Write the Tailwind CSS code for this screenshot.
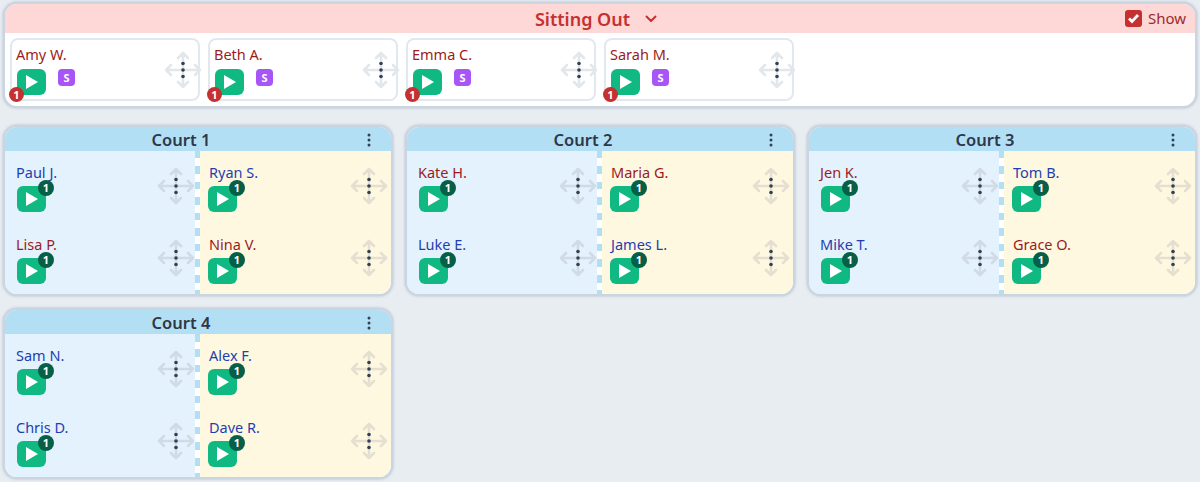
<!DOCTYPE html>
<html lang="en">

<head>
  <meta charset="UTF-8" />
  <title>Courts</title>
  <script src="https://cdn.jsdelivr.net/npm/@tailwindcss/browser@4"></script>
</head>

<body class="bg-[#e8edf2] font-['Noto_Sans',sans-serif] overflow-hidden">
  <div class="h-[482px] px-[3px] pt-[2px]">
    <section class="h-[106px] border-2 border-[#cbd5e1] rounded-[14px] bg-white overflow-hidden shadow-[0_0_3px_rgba(100,116,139,0.4)]">
      <header class="relative h-[29px] bg-[#fed7d7] flex items-center justify-center gap-[14px] pr-[7px]">
        <h2 class="text-[18px] font-semibold text-[#c53030] leading-none">Sitting Out</h2>
        <svg class="w-[14px] h-[14px]" viewBox="0 0 14 14" fill="none" stroke="#c53030" stroke-width="2" stroke-linecap="round" stroke-linejoin="round"><path d="M2.500 4.500 7 9l4.500-4.500" /></svg>
        <label class="absolute right-[9px] top-0 h-[29px] flex items-center gap-[6px] text-[15px] text-[#9b2c2c]">
          <span class="w-[17px] h-[17px] rounded-[3px] bg-[#c53030] flex items-center justify-center">
            <svg class="w-[13px] h-[13px]" viewBox="0 0 13 13" fill="none" stroke="white" stroke-width="2.800"><path d="M2 6.500 5 9.500 11 3" /></svg>
          </span>
          Show
        </label>
      </header>
      <div id="sittingOut" class="flex gap-2 pl-[5px] pt-[5px]"></div>
    </section>

    <div id="courts" class="mt-[17px] grid grid-cols-3 gap-x-3 gap-y-3"></div>
  </div>

  <script>
    const moveIcon = (color) => `
      <svg class="w-[38px] h-[38px]" viewBox="0 0 38 38" fill="none" stroke="${color}" stroke-width="2.600" stroke-linecap="round" stroke-linejoin="round">
        <path d="M19 2v34M2 19h34M14 7l5-5 5 5M14 31l5 5 5-5M7 14l-5 5 5 5M31 14l5 5-5 5" />
        <circle cx="19" cy="12.500" r="1.800" fill="#334155" stroke="none" />
        <circle cx="19" cy="19" r="1.800" fill="#334155" stroke="none" />
        <circle cx="19" cy="25.500" r="1.800" fill="#334155" stroke="none" />
      </svg>`;

    const playButton = (badge) => `
      <div class="relative w-[29px] h-[26px] rounded-[6px] bg-[#10b981] flex items-center justify-center">
        <svg class="w-[14px] h-[16px]" viewBox="0 0 14 16" fill="white"><path d="M1 1v14l12-7z" /></svg>
        ${badge}
      </div>`;

    const courtBadge = `<span class="absolute right-[-8px] top-[-6px] w-[16px] h-[16px] rounded-full bg-[#065f46] text-white text-[11px] font-bold leading-[16px] text-center">1</span>`;
    const sitBadge = `<span class="absolute left-[-8px] bottom-[-7px] w-[15px] h-[15px] rounded-full bg-[#c53030] text-white text-[11px] font-bold leading-[15px] text-center">1</span>`;

    const sitters = ["Amy W.", "Beth A.", "Emma C.", "Sarah M."];

    document.getElementById("sittingOut").innerHTML = sitters.map(name => `
      <div class="relative w-[190px] h-[63px] rounded-[8px] border-2 border-[#e2e8f0] pl-[5px] pt-[4px]">
        <p class="text-[14.500px] leading-[20px] -ml-[1px] text-[#9b1c1c]">${name}</p>
        <div class="flex items-start gap-[12px] mt-[5px]">
          ${playButton(sitBadge)}
          <span class="w-[17px] h-[17px] rounded-[4px] bg-[#a855f7] text-white text-[11px] font-bold leading-[17px] text-center">S</span>
        </div>
        <div class="absolute right-[-4px] top-[11px]">${moveIcon("#e2e7ec")}</div>
      </div>`).join("");

    const blue = "text-[#1e40af]";
    const red = "text-[#9b1c1c]";
    const courts = [
      { name: "Court 1", players: [["Paul J.", blue], ["Ryan S.", blue], ["Lisa P.", red], ["Nina V.", red]] },
      { name: "Court 2", players: [["Kate H.", red], ["Maria G.", red], ["Luke E.", blue], ["James L.", blue]] },
      { name: "Court 3", players: [["Jen K.", red], ["Tom B.", blue], ["Mike T.", blue], ["Grace O.", red]] },
      { name: "Court 4", players: [["Sam N.", blue], ["Alex F.", blue], ["Chris D.", blue], ["Dave R.", blue]] }
    ];

    const leftCell = ([name, color]) => `
      <div class="relative h-[71.500px] pl-[12px] pt-[11px]">
        <p class="text-[14.500px] leading-[20px] -ml-[1px] ${color}">${name}</p>
        <div class="mt-[4px]">${playButton(courtBadge)}</div>
        <div class="absolute right-0 top-[16px]">${moveIcon("#d0dbe5")}</div>
      </div>`;

    const rightCell = ([name, color]) => `
      <div class="relative h-[71.500px] pl-[8px] pt-[11px]">
        <p class="text-[14.500px] leading-[20px] ml-[1px] ${color}">${name}</p>
        <div class="mt-[4px]">${playButton(courtBadge)}</div>
        <div class="absolute right-[3px] top-[16px]">${moveIcon("#e4dfd0")}</div>
      </div>`;

    document.getElementById("courts").innerHTML = courts.map(court => `
      <section class="h-[171px] rounded-[14px] border-2 border-[#cbd5e1] overflow-hidden bg-white shadow-[0_0_3px_rgba(100,116,139,0.4)]">
        <header class="relative h-[24px] bg-[#b3dff5] flex items-center justify-center pr-[34px] pt-[2px]">
          <h3 class="text-[16.500px] font-semibold text-[#2d3748] leading-none">${court.name}</h3>
          <svg class="absolute right-[20px] top-[6px] w-[4px] h-[14px]" viewBox="0 0 4 14" fill="#334155"><circle cx="2" cy="2" r="1.500" /><circle cx="2" cy="7" r="1.500" /><circle cx="2" cy="12" r="1.500" /></svg>
        </header>
        <div class="flex h-[143px]">
          <div class="w-[190px] bg-[#e3f2fd]">
            ${leftCell(court.players[0])}
            ${leftCell(court.players[2])}
          </div>
          <div class="w-[5px] bg-[repeating-linear-gradient(to_bottom,#b3dff5_0,#b3dff5_7.500px,white_7.500px,white_15.500px)]"></div>
          <div class="flex-1 bg-[#fff8e1]">
            ${rightCell(court.players[1])}
            ${rightCell(court.players[3])}
          </div>
        </div>
      </section>`).join("");
  </script>
</body>

</html>
